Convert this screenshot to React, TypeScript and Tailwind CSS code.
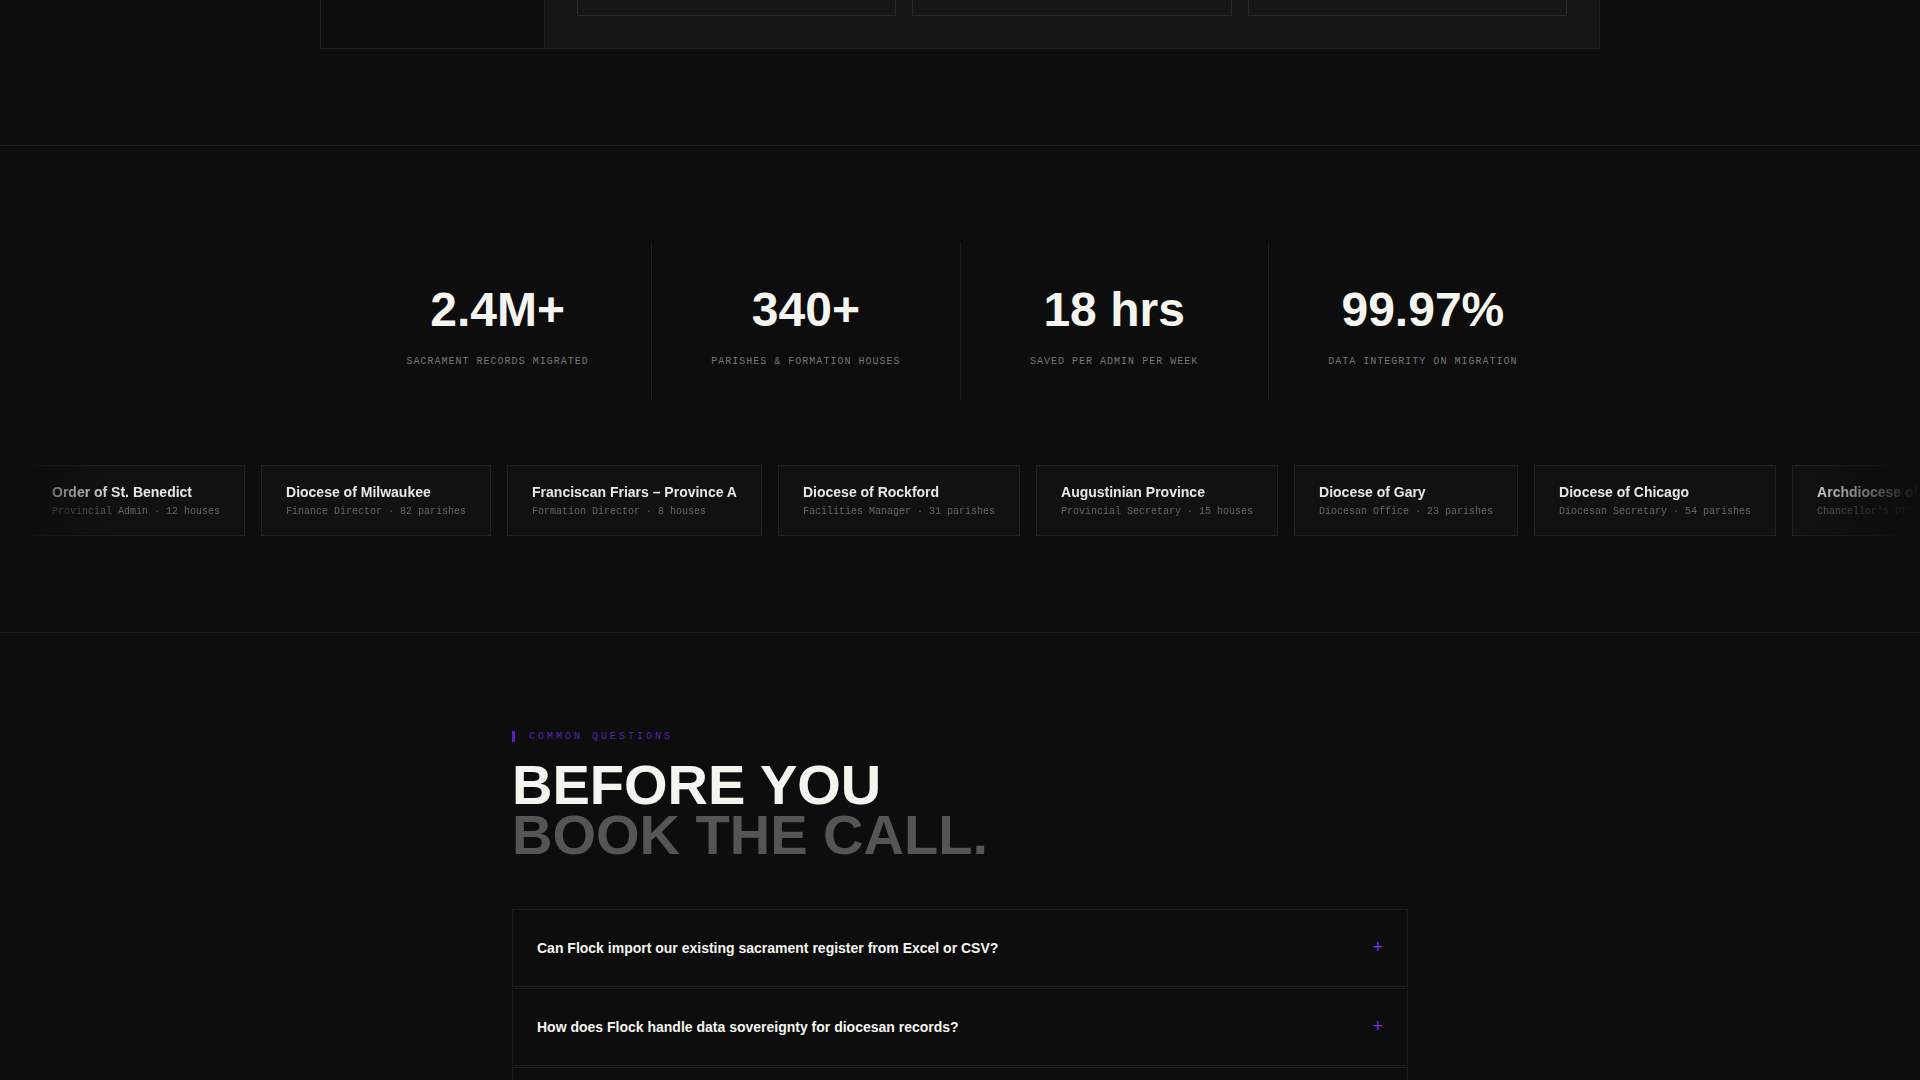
const stats = [
  ["2.4M+", "SACRAMENT RECORDS MIGRATED"],
  ["340+", "PARISHES & FORMATION HOUSES"],
  ["18 hrs", "SAVED PER ADMIN PER WEEK"],
  ["99.97%", "DATA INTEGRITY ON MIGRATION"],
];

const orgs = [
  ["Order of St. Benedict", "Provincial Admin · 12 houses"],
  ["Diocese of Milwaukee", "Finance Director · 82 parishes"],
  ["Franciscan Friars – Province A", "Formation Director · 8 houses"],
  ["Diocese of Rockford", "Facilities Manager · 31 parishes"],
  ["Augustinian Province", "Provincial Secretary · 15 houses"],
  ["Diocese of Gary", "Diocesan Office · 23 parishes"],
  ["Diocese of Chicago", "Diocesan Secretary · 54 parishes"],
  ["Archdiocese of Detroit", "Chancellor's Office · 44 parishes"],
];

const faqs = [
  "Can Flock import our existing sacrament register from Excel or CSV?",
  "How does Flock handle data sovereignty for diocesan records?",
];

export default function App() {
  return (
    <div className="h-[1080px] overflow-hidden bg-[#0d0d0d] font-['Liberation_Sans',Arial,sans-serif] text-[#f5f5f0]">
      <section className="h-[146px] border-b border-[#1e1e1e] px-[320px]">
        <div className="flex h-[49px] w-[1280px] border border-t-0 border-[#222222]">
          <div className="w-[224px] border-r border-[#222222] bg-[#0d0d0d]" />
          <div className="flex flex-1 items-start gap-4 bg-[#161616] px-8">
            <div className="h-[16px] flex-1 border border-t-0 border-[#2a2a2a]" />
            <div className="h-[16px] flex-1 border border-t-0 border-[#2a2a2a]" />
            <div className="h-[16px] flex-1 border border-t-0 border-[#2a2a2a]" />
          </div>
        </div>
      </section>

      <section className="h-[487px] border-b border-[#1e1e1e] pt-[96px]">
        <div className="ml-[344px] grid h-[158px] w-[1233px] grid-cols-4">
          {stats.map(([value, label], i) => (
            <div
              key={label}
              className={`flex flex-col items-center pt-[44px] ${i < 3 ? "border-r border-[#1e1e1e]" : ""}`}
            >
              <div className="text-[48px] leading-[48px] font-bold">{value}</div>
              <div className="mt-[20px] font-['Liberation_Mono',monospace] text-[10px] leading-[15px] tracking-[1px] text-[#777777]">
                {label}
              </div>
            </div>
          ))}
        </div>
        <div className="mt-[65px] overflow-hidden [mask-image:linear-gradient(90deg,transparent,black_120px,black_1800px,transparent)]">
          <div className="ml-[27px] flex w-max gap-4">
            {orgs.map(([name, sub]) => (
              <div key={name} className="h-[71px] border border-[#222222] bg-[#111111] px-6 pt-[16px]">
                <div className="text-[14px] leading-[21px] font-bold text-[#e8e8e3]">{name}</div>
                <div className="mt-px font-['Liberation_Mono',monospace] text-[10px] leading-[15px] text-[#666666]">{sub}</div>
              </div>
            ))}
          </div>
        </div>
      </section>

      <section className="mx-auto w-[896px] pt-[96px]">
        <div className="flex items-center gap-[14px] font-['Liberation_Mono',monospace] text-[10px] leading-[15px] tracking-[3px] text-[#5b21b6]">
          <span className="h-[11px] w-[3px] bg-[#5b21b6]" />
          <span>COMMON QUESTIONS</span>
        </div>
        <h2 className="mt-[16px] text-[56px] leading-[50.4px] font-bold">
          <div>BEFORE YOU</div>
          <div className="text-[#555555]">BOOK THE CALL.</div>
        </h2>
        <div className="mt-[48px] flex flex-col gap-px">
          {faqs.map((q) => (
            <div key={q} className="flex h-[78px] items-center justify-between border border-[#1e1e1e] px-6">
              <span className="relative top-px text-[14px] font-bold">{q}</span>
              <span className="text-[18px] text-[#8b2be2]">+</span>
            </div>
          ))}
          <div className="h-[20px] border border-[#1e1e1e]" />
        </div>
      </section>
    </div>
  );
}
